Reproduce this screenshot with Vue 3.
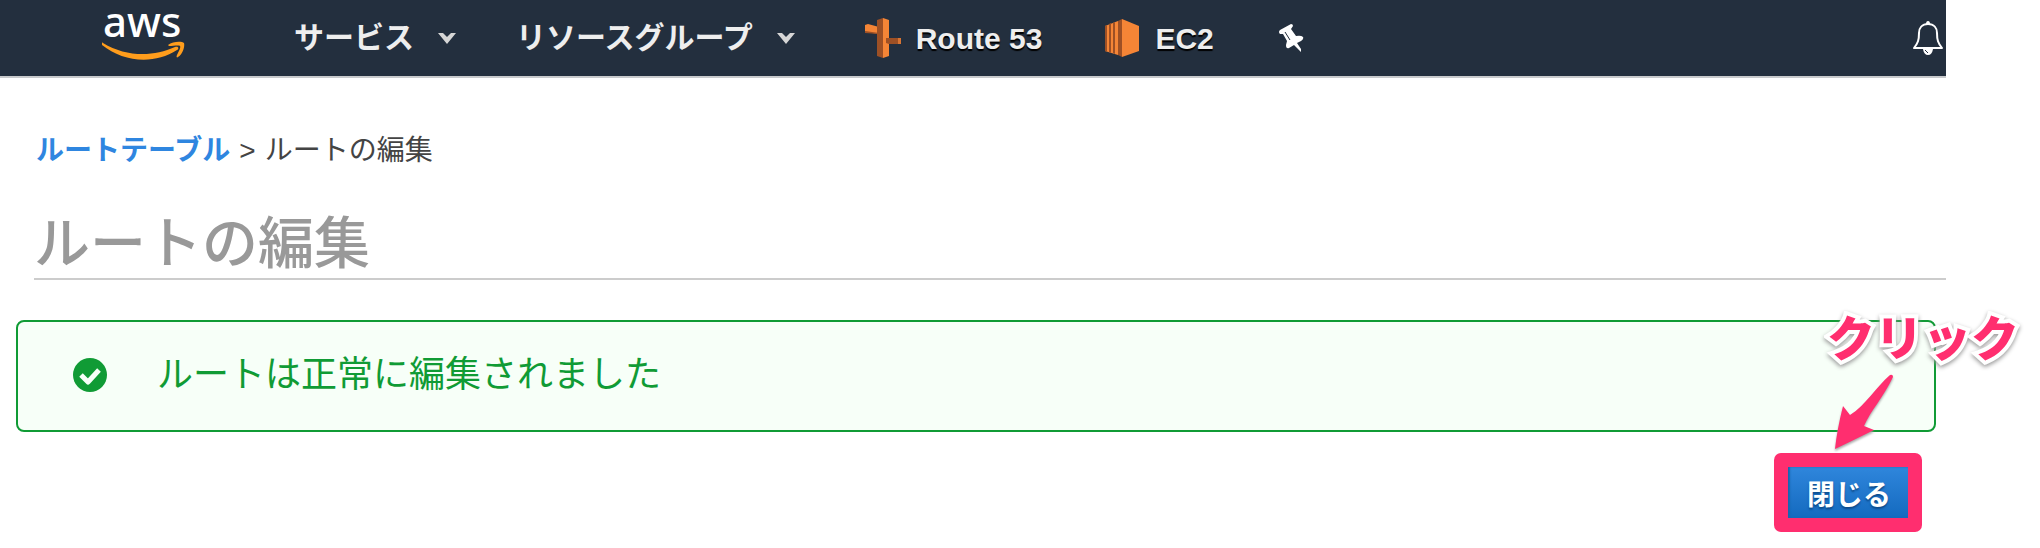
<script setup>
const menus = ['サービス', 'リソースグループ']
</script>

<template>
  <div class="console">
    <header class="topbar">
      <a href="#" class="logo" aria-label="aws">
        <svg width="84" height="62" viewBox="0 0 84 62" aria-hidden="true">
          <text x="1" y="37" class="logo-word">aws</text>
          <path d="M1 43C24 57 51 57 73 47C77 46 77 49 75 50C52 65 21 62 0 45C-1 43 0 42 1 43Z" fill="#ff9d1c" />
          <path d="M66 45C71 41 80 41 82 43C83 46 81 54 76 57C75 58 74 57 75 55C77 51 79 47 78 46C77 45 71 46 67 46Z" fill="#ff9d1c" />
        </svg>
      </a>
      <nav class="nav">
        <button v-for="menu in menus" :key="menu" type="button" class="menu">
          <span>{{ menu }}</span>
          <svg width="18" height="11" viewBox="0 0 18 11" aria-hidden="true">
            <path d="M0 0H5L9 4L13 0H18L9 11Z" fill="#d6d6d6" />
          </svg>
        </button>
        <a href="#" class="shortcut route">
          <svg width="38" height="40" viewBox="0 0 38 40" aria-hidden="true">
            <path d="M1 7L4 6L15 9V16L1 14Z" fill="#f58536" />
            <path d="M1 13L15 15V16L1 15Z" fill="#9d5025" />
            <path d="M13 2L19 0V40L13 38Z" fill="#9d5025" />
            <path d="M19 0L25 2V38L19 40Z" fill="#f58536" />
            <path d="M22 20L25 20H34V26H25L22 25Z" fill="#9d5025" />
            <path d="M34 20H37V26H34Z" fill="#d87432" />
          </svg>
          <span>Route 53</span>
        </a>
        <a href="#" class="shortcut ec2">
          <svg width="34" height="38" viewBox="0 0 34 38" aria-hidden="true">
            <path d="M17 0L34 7V32L17 38Z" fill="#f58536" />
            <path d="M17 0L13 2V36L17 38Z" fill="#9d5025" />
            <path d="M0 7L13 2V36L0 32Z" fill="#f58536" />
            <path d="M0 7L2 6V33L0 32ZM4 5L6 4V34L4 33ZM8 4L10 3V35L8 34Z" fill="#9d5025" />
          </svg>
          <span>EC2</span>
        </a>
        <button type="button" class="icon-button" aria-label="ショートカットを固定">
          <svg width="25" height="28" viewBox="0 0 25 28" aria-hidden="true">
            <path d="M1 6L12 0Q14 0 14 2L12 5L17 12Q22 11 24 13Q25 15 22 17L18 19L22 25V28L15 21L10 24Q7 25 7 21L8 17L4 10H1Q-1 8 1 6Z" fill="#fff" />
            <path d="M6 8L11 16" stroke="#232f3e" stroke-width="1" />
          </svg>
        </button>
      </nav>
      <button type="button" class="icon-button bell" aria-label="通知">
        <svg width="32" height="35" viewBox="0 0 32 35" aria-hidden="true">
          <path d="M16 3C10 3 7 7 7 12C7 19 6 22 2 27H30C26 22 25 19 25 12C25 7 22 3 16 3Z" fill="none" stroke="#fff" stroke-width="2" stroke-linejoin="round" />
          <path d="M14 3Q14 0 16 0Q18 0 18 3Z" fill="#fff" />
          <path d="M11 28H21Q20 34 16 34Q12 34 11 28Z" fill="#fff" />
          <path d="M13 29L16 32" stroke="#232f3e" stroke-width="1" />
        </svg>
      </button>
    </header>

    <main>
      <nav class="breadcrumb" aria-label="パンくず">
        <a href="#">ルートテーブル</a>
        <span>&gt;</span>
        <span>ルートの編集</span>
      </nav>
      <h1>ルートの編集</h1>
      <div class="alert" role="status">
        <svg width="34" height="34" viewBox="0 0 34 34" aria-hidden="true">
          <circle cx="17" cy="17" r="17" fill="#109b35" />
          <path d="M8 17L15 24L26 12" fill="none" stroke="#f7fff8" stroke-width="5" stroke-linejoin="round" />
        </svg>
        <p>ルートは正常に編集されました</p>
      </div>
      <div class="actions">
        <div class="highlight">
          <button type="button" class="close">閉じる</button>
          <span class="callout">クリック</span>
          <svg class="arrow" width="66" height="82" viewBox="0 0 66 82" aria-hidden="true">
            <path d="M61 3Q64 2 64 5C54 26 42 38 35 54L45 58Q29 66 6 77Q8 58 14 34L21 43C37 33 47 15 61 3Z" fill="#ff2e6f" />
          </svg>
        </div>
      </div>
    </main>
  </div>
</template>

<style>
body {
  margin: 0;
  background: #fff;
}
</style>

<style scoped>
.console {
  margin-right: 94px;
  font-family: "Liberation Sans", "Noto Sans CJK JP", sans-serif;
  color: #444;
}
button {
  border: 0;
  padding: 0;
  background: none;
  font: inherit;
  color: inherit;
  cursor: pointer;
}
a {
  text-decoration: none;
}
svg {
  display: block;
  flex: none;
}
.topbar {
  display: flex;
  align-items: center;
  height: 76px;
  padding: 0 2px 0 102px;
  background: #232f3e;
  border-bottom: 2px solid #c8cacc;
}
.logo {
  align-self: flex-start;
  margin-right: 108px;
}
.logo-word {
  font-family: "Noto Sans", sans-serif;
  font-size: 42px;
  font-weight: 500;
  fill: #fff;
}
.nav {
  display: flex;
  align-items: center;
  font-size: 30px;
  font-weight: bold;
  line-height: 40px;
  color: #eee;
  text-shadow: 0 2px 1px #000;
}
.menu {
  display: flex;
  align-items: center;
  gap: 24px;
  margin-right: 60px;
}
.shortcut {
  display: flex;
  align-items: center;
  color: #eee;
}
.shortcut span {
  padding-top: 2px;
}
.route {
  gap: 14px;
  margin: 0 63px 0 9px;
}
.ec2 {
  gap: 16px;
  margin-right: 65px;
}
.bell {
  margin-left: auto;
}
.breadcrumb {
  display: flex;
  gap: 9px;
  margin: 52px 0 0 36px;
  font-size: 28px;
  line-height: 42px;
}
.breadcrumb a {
  color: #2f86e0;
  font-weight: bold;
}
h1 {
  margin: 38px 0 0 34px;
  border-bottom: 2px solid #ccc;
  font-size: 56px;
  font-weight: 500;
  line-height: 68px;
  color: #999;
}
.alert {
  display: flex;
  align-items: center;
  gap: 50px;
  margin: 40px 10px 0 16px;
  padding: 26px 55px 28px;
  border: 2px solid #109b35;
  border-radius: 8px;
  background: #f7fff8;
  color: #109b35;
  font-size: 36px;
  line-height: 54px;
}
.alert p {
  margin: 0;
}
.actions {
  display: flex;
  justify-content: flex-end;
  padding: 21px 24px 16px 0;
}
.highlight {
  position: relative;
  padding: 14px;
  border-radius: 7px;
  background: #ff2e6f;
}
.close {
  display: block;
  padding: 8px 17px 1px 19px;
  background: linear-gradient(#2f86dc, #146abf);
  box-shadow: inset 2px 0 2px #1767b0;
  color: #fff;
  font-size: 28px;
  font-weight: bold;
  line-height: 42px;
  text-shadow: 0 2px 2px #0c4a8a;
}
.callout {
  position: absolute;
  left: 53px;
  bottom: 156px;
  white-space: nowrap;
  font-size: 48px;
  font-weight: 900;
  line-height: 72px;
  color: #ff2e6f;
  -webkit-text-stroke: 8px #fff;
  paint-order: stroke fill;
  filter: drop-shadow(0 2px 2px #999);
}
.arrow {
  position: absolute;
  left: 55px;
  bottom: 78px;
  filter: drop-shadow(0 2px 1px #aaa);
}
</style>
